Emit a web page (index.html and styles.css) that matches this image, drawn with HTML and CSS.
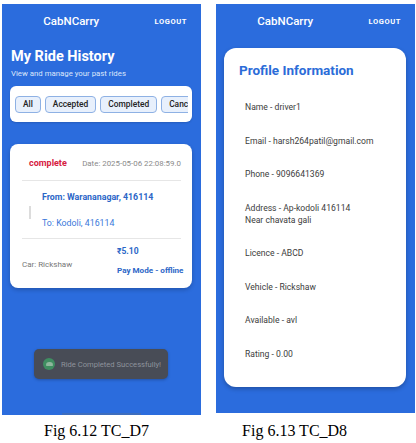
FILE: index.html
```html
<!DOCTYPE html>
<html>
<head>
<meta charset="utf-8">
<link rel="stylesheet" href="styles.css">
</head>
<body>
<div class="sheet">
  <div class="phones">
    <div class="phone phone-left">
      <div class="appbar">
        <div class="brand">CabNCarry</div>
        <div class="logout">LOGOUT</div>
      </div>
      <div class="history">
        <h1 class="page-title">My Ride History</h1>
        <p class="page-sub">View and manage your past rides</p>
        <div class="filter-card">
          <div class="chips">
            <span class="chip">All</span>
            <span class="chip">Accepted</span>
            <span class="chip">Completed</span>
            <span class="chip">Cancelled</span>
          </div>
        </div>
        <div class="ride-card">
          <div class="ride-top">
            <span class="status">complete</span>
            <span class="date">Date: 2025-05-06 22:08:59.0</span>
          </div>
          <div class="route">
            <div class="route-bar"></div>
            <div class="route-text">
              <div class="from">From: Warananagar, 416114</div>
              <div class="to">To: Kodoli, 416114</div>
            </div>
          </div>
          <div class="ride-bottom">
            <span class="car">Car: Rickshaw</span>
            <div class="pay">
              <div class="price">₹5.10</div>
              <div class="mode">Pay Mode - offline</div>
            </div>
          </div>
        </div>
      </div>
      <div class="toast">
        <span class="toast-icon"><span class="toast-dome"></span></span>
        <span class="toast-text">Ride Completed Successfully!</span>
      </div>
      <div class="navpill"></div>
    </div>
    <div class="phone phone-right">
      <div class="appbar">
        <div class="brand">CabNCarry</div>
        <div class="logout">LOGOUT</div>
      </div>
      <div class="profile-card">
        <h2 class="profile-title">Profile Information</h2>
        <div class="profile-list">
          <div class="item">Name - driver1</div>
          <div class="item">Email - harsh264patil@gmail.com</div>
          <div class="item">Phone - 9096641369</div>
          <div class="item">Address - Ap-kodoli 416114<br>Near chavata gali</div>
          <div class="item">Licence - ABCD</div>
          <div class="item">Vehicle - Rickshaw</div>
          <div class="item">Available - avl</div>
          <div class="item">Rating - 0.00</div>
        </div>
      </div>
    </div>
  </div>
  <div class="captions">
    <div class="caption caption-left">Fig 6.12 TC_D7</div>
    <div class="caption caption-right">Fig 6.13 TC_D8</div>
  </div>
</div>
</body>
</html>
```

FILE: styles.css
```css
* { box-sizing: border-box; }
html, body { margin: 0; padding: 0; background: #fff; }
body { width: 416px; height: 443px; overflow: hidden; font-family: Roboto, "Liberation Sans", sans-serif; }

.sheet { padding-top: 4px; }
.phones { display: flex; align-items: flex-start; padding-left: 2px; gap: 15px; }

.phone {
  position: relative;
  width: 199px;
  background: #2b6cdd;
  overflow: hidden;
  display: flex;
  flex-direction: column;
}
.phone-left { height: 411px; }
.phone-right { height: 409px; }

.appbar { display: flex; align-items: center; height: 34px; padding-right: 14px; }
.brand { flex: 1; text-align: center; color: #fff; font-size: 11.5px; font-weight: 500; }
.logout { margin-left: 14px; color: #fff; font-size: 7.5px; font-weight: 700; letter-spacing: 0.6px; }

.history { padding: 10px 9px 0 8px; }
.page-title { margin: 0; color: #fff; font-size: 14.5px; font-weight: 700; line-height: 18px; padding-left: 1px; }
.page-sub { margin: 3px 0 0; color: #dce7fb; font-size: 7.8px; line-height: 10px; padding-left: 1px; }

.filter-card {
  margin-top: 7px;
  height: 36px;
  background: #fff;
  border-radius: 6px;
  padding: 10px 4px 0 5px;
  box-shadow: 0 1px 2px rgba(0,0,0,0.15);
}
.chips { display: flex; gap: 4px; overflow: hidden; white-space: nowrap; }
.chip {
  flex: none;
  height: 17px;
  line-height: 15px;
  padding: 0 7px;
  border: 1px solid #8eb1e4;
  border-radius: 4px;
  background: #e8f0fc;
  color: #222;
  font-size: 8.4px;
  font-weight: 500;
}

.ride-card {
  margin-top: 22px;
  height: 144px;
  background: #fff;
  border-radius: 8px;
  padding: 0 11px 0 12px;
  box-shadow: 0 2px 4px rgba(0,0,0,0.2);
}
.ride-top { display: flex; align-items: center; justify-content: space-between; height: 37px; padding-left: 7px; border-bottom: 1px solid #e6e6e6; padding-top: 2px; white-space: nowrap; }
.status { color: #d6203f; font-weight: 700; font-size: 9px; }
.date { color: #8a8a8a; font-size: 7.9px; }

.route { display: flex; align-items: center; height: 58px; border-bottom: 1px solid #e6e6e6; padding-left: 7px; }
.route-bar { width: 2px; height: 13px; background: #dcdcdc; margin-top: 6px; }
.route-text { margin-left: 11px; display: flex; flex-direction: column; gap: 14px; white-space: nowrap; }
.from { color: #2b66c7; font-weight: 700; font-size: 8.8px; line-height: 12px; }
.to { color: #3a78da; font-size: 8.8px; line-height: 12px; }

.ride-bottom { display: flex; align-items: center; height: 48px; white-space: nowrap; }
.car { color: #777; font-size: 8px; flex: none; width: 95px; margin-top: 2px; }
.pay { display: flex; flex-direction: column; gap: 8px; margin-top: -4px; }
.price { color: #2b66c7; font-weight: 700; font-size: 8.5px; line-height: 11px; }
.mode { color: #2b66c7; font-weight: 700; font-size: 8.1px; line-height: 11px; }

.toast {
  position: absolute;
  left: 32px;
  top: 345px;
  width: 134px;
  height: 30px;
  background: #484c56;
  border-radius: 5px;
  display: flex;
  align-items: center;
  padding-left: 9px;
  box-shadow: 0 1px 3px rgba(0,0,0,0.25);
}
.toast-icon {
  width: 12px; height: 12px; border-radius: 50%;
  background: #3f8e61;
  display: flex; align-items: center; justify-content: center;
}
.toast-dome { width: 7px; height: 4px; background: #8fb79d; border-radius: 4px 4px 1px 1px; margin-top: -1px; }
.toast-text { margin-left: 6px; color: #8e939c; font-size: 7.6px; white-space: nowrap; }

.navpill {
  position: absolute;
  left: 60px;
  bottom: 0;
  width: 79px;
  height: 2px;
  background: #3d6dbd;
}

.profile-card {
  margin: 10px 9px 0 8px;
  height: 339px;
  background: #fff;
  border-radius: 12px;
  padding: 13px 0 0 15px;
  box-shadow: 0 2px 4px rgba(0,0,0,0.25);
}
.profile-title { margin: 0; color: #2b6cd8; font-size: 13.5px; font-weight: 700; line-height: 18px; }
.profile-list { margin-top: 22px; padding-left: 6px; display: flex; flex-direction: column; gap: 21.5px; }
.item { color: #3c3c3c; font-size: 8.6px; line-height: 12px; }

.captions { display: flex; margin-top: 7px; }
.caption { font-family: "Liberation Serif", "Times New Roman", serif; font-size: 16px; line-height: 18px; color: #000; }
.caption-left { margin-left: 44px; }
.caption-right { margin-left: 93px; }
```
